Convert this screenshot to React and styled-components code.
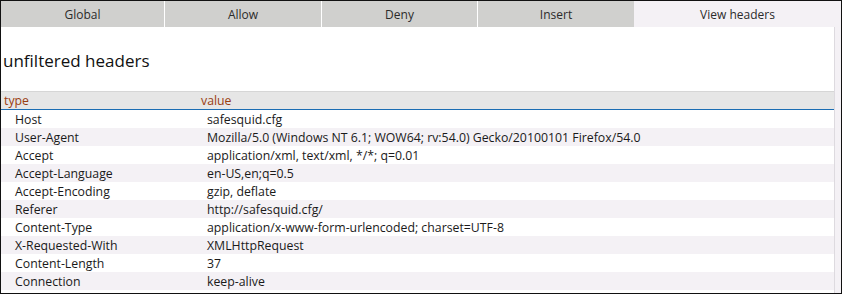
import React from 'react'
import styled, {createGlobalStyle} from 'styled-components'

const GlobalStyle = createGlobalStyle`
  html, body {
    margin: 0;
    padding: 0;
    background: #ffffff;
  }
  * { box-sizing: border-box; }
`

const Frame = styled.div`
  width: 842px;
  height: 294px;
  border: 1px solid #111;
  background: #f4f1f5;
  font-family: "Open Sans", "Noto Sans", sans-serif;
  display: flex;
  flex-direction: column;
  overflow: hidden;
`

const TabBar = styled.div`
  display: flex;
  height: 26px;
  background: #d0d0ce;
`

const Tab = styled.div`
  width: ${p => p.$w}px;
  flex: none;
  display: flex;
  align-items: center;
  justify-content: center;
  font-size: 12px;
  color: #2b2b2b;
  background: ${p => (p.$active ? '#f4f1f5' : '#d0d0ce')};
  border-left: ${p => (p.$first ? 'none' : '1px solid #ffffff')};
  ${p => p.$active && 'border-left: none; flex: 1;'}
`

const Panel = styled.div`
  flex: 1;
  width: 834px;
  background: #ffffff;
  border-right: 1px solid #dddadf;
  display: flex;
  flex-direction: column;
`

const Title = styled.h2`
  margin: 0;
  padding: 22px 0 0 2px;
  height: 64px;
  font-weight: 400;
  font-size: 17px;
  color: #111;
`

const Table = styled.div`
  display: flex;
  flex-direction: column;
`

const HeadRow = styled.div`
  display: grid;
  grid-template-columns: 197px 1fr;
  height: 19px;
  align-items: center;
  background: #e6e6e6;
  border-top: 1px solid #d6d6d6;
  border-bottom: 1px solid #1b6db3;
  font-size: 12.3px;
  color: #9a3d12;
  padding-left: 3px;
`

const Row = styled.div`
  display: grid;
  grid-template-columns: 192px 1fr;
  height: 18px;
  align-items: center;
  padding-left: 14px;
  font-size: 12.3px;
  color: #1a1a1a;
  background: ${p => (p.$alt ? '#f4f1f5' : '#ffffff')};
  white-space: nowrap;
`

const tabs = [
  {label: 'Global', w: 163},
  {label: 'Allow', w: 157},
  {label: 'Deny', w: 156},
  {label: 'Insert', w: 157},
  {label: 'View headers', w: 207, active: true}
]

const headers = [
  ['Host', 'safesquid.cfg'],
  ['User-Agent', 'Mozilla/5.0 (Windows NT 6.1; WOW64; rv:54.0) Gecko/20100101 Firefox/54.0'],
  ['Accept', 'application/xml, text/xml, */*; q=0.01'],
  ['Accept-Language', 'en-US,en;q=0.5'],
  ['Accept-Encoding', 'gzip, deflate'],
  ['Referer', 'http://safesquid.cfg/'],
  ['Content-Type', 'application/x-www-form-urlencoded; charset=UTF-8'],
  ['X-Requested-With', 'XMLHttpRequest'],
  ['Content-Length', '37'],
  ['Connection', 'keep-alive']
]

export default function App() {
  return (
    <>
      <GlobalStyle />
      <Frame>
        <TabBar>
          {tabs.map((t, i) => (
            <Tab key={t.label} $w={t.w} $first={i === 0} $active={t.active}>
              {t.label}
            </Tab>
          ))}
        </TabBar>
        <Panel>
          <Title>unfiltered headers</Title>
          <Table>
            <HeadRow>
              <span>type</span>
              <span>value</span>
            </HeadRow>
            {headers.map(([k, v], i) => (
              <Row key={k} $alt={i % 2 === 1}>
                <span>{k}</span>
                <span>{v}</span>
              </Row>
            ))}
          </Table>
        </Panel>
      </Frame>
    </>
  )
}
